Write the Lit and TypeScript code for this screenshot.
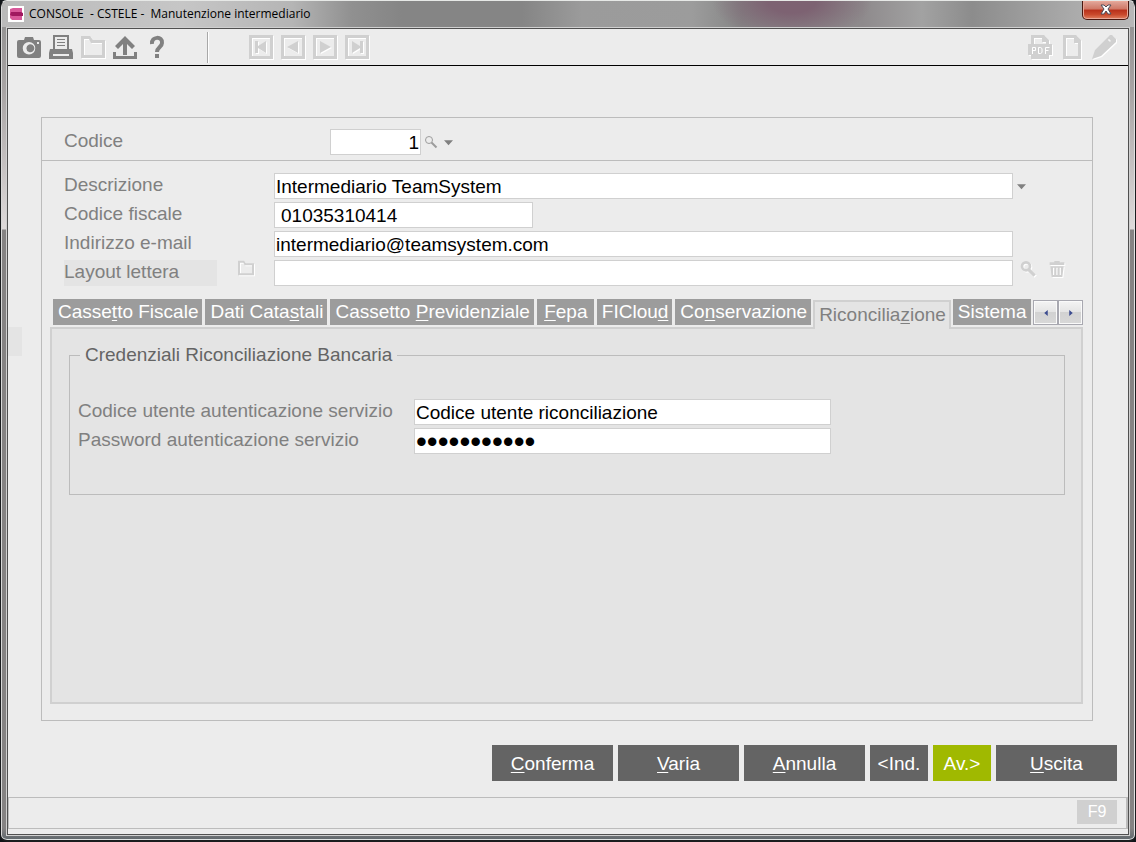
import { LitElement, html, css, svg, nothing } from "lit";
import { customElement, property, state } from "lit/decorators.js";

const ICONS: Record<string, unknown> = {
  camera: svg`<path fill-rule="evenodd" d="M7 5 8 2h8l1 3h5a2 2 0 0 1 2 2v14a2 2 0 0 1-2 2H2a2 2 0 0 1-2-2V7a2 2 0 0 1 2-2zM12 7a6 6 0 1 0 0 12.500A6 6 0 0 0 12 7zM12 9.500a4 4 0 1 1 0 7.500a4 4 0 0 1 0-7.500zM20 7v2h2V7z"/>`,
  printer: svg`<path fill-rule="evenodd" d="M4 0h16v14h-2V2H6v12H4zM8 4h8v1H8zM8 7h8v1H8zM8 10h8v1H8zM1 14h22l1 4v6H0v-6zM4 19v2h16v-2z"/>`,
  folder: svg`<path fill-rule="evenodd" d="M0 1h9l3 4h12v18H0zM3 4v16h18V8H10L8 4z"/>`,
  upload: svg`<path d="M12 1 22 11l-3 3-5-5v11h-4V9l-5 5-3-3zM0 17h3v4h18v-4h3v7H0z"/>`,
  help: svg`<path d="M7 9c-1-8 11-8 10-1 0 4-5 4-5 9" fill="none" stroke="currentColor" stroke-width="4"/><path d="M10 19h4v4h-4z"/>`,
  first: svg`<path fill-rule="evenodd" d="M0 0h24v24H0zM3 3v18h18V3z"/><path d="M6 6h3v5l8-5v12l-8-5v5H6z"/>`,
  prev: svg`<path fill-rule="evenodd" d="M0 0h24v24H0zM3 3v18h18V3z"/><path d="M17 6v12L6 12z"/>`,
  next: svg`<path fill-rule="evenodd" d="M0 0h24v24H0zM3 3v18h18V3z"/><path d="M7 6v12l11-6z"/>`,
  last: svg`<path fill-rule="evenodd" d="M0 0h24v24H0zM3 3v18h18V3z"/><path d="M18 6h-3v5L7 6v12l8-5v5h3z"/>`,
  pdf: svg`<path fill-rule="evenodd" d="M3 0h13l5 5v4h3v11h-3v4H3v-4H0V9h3zM6 3v6h12V7h-4V3z"/><path d="M4.500 19v-6.500h3v3h-3M10.500 12.500v6h2l1.500-1v-4l-1.500-1zM17.500 19v-6.500h4M17.500 15.500h3" fill="none" stroke="#fff"/>`,
  page: svg`<path fill-rule="evenodd" d="M3 0h13l5 5v19H3zM6 3v18h12V8h-4V3z"/>`,
  pencil: svg`<path fill-rule="evenodd" d="M18 0h2l4 4v3L9 21l-9 3 3-9zM17 4l-1 1 2 2 1-1z"/>`,
  search: svg`<circle cx="9" cy="8" r="6" fill="none" stroke="currentColor" stroke-width="4"/><path d="m13 13 9 9" stroke="currentColor" stroke-width="5"/>`,
  lens: svg`<circle cx="8" cy="8" r="7" fill="none" stroke="currentColor" stroke-width="2"/><path d="m13 13 10 10" stroke="currentColor" stroke-width="4"/>`,
  trash: svg`<path fill-rule="evenodd" d="M8 0h8v2h7v4H1V2h7zM2 8h20l-2 16H4zM6 10v11h2V10zM11 10v11h2V10zM16 10v11h2V10z"/>`,
  down: svg`<path d="M0 6h24L12 19z"/>`,
  left: svg`<path d="M19 0v24L5 12z"/>`,
  right: svg`<path d="M5 0v24l14-12z"/>`,
};

@customElement("ts-icon")
class TsIcon extends LitElement {
  @property() name = "";

  static styles = css`
    :host {
      display: block;
    }
    .glyph {
      display: block;
      width: 100%;
      height: 100%;
      fill: currentColor;
      overflow: visible;
    }
  `;

  render() {
    return html`<svg class="glyph" viewBox="0 0 24 24" aria-hidden="true">${ICONS[this.name] ?? nothing}</svg>`;
  }
}

interface Item {
  id: string;
  pre: string;
  key: string;
  post: string;
  kind?: string;
}

const TABS: Item[] = [
  { id: "cf", pre: "Casse", key: "t", post: "to Fiscale" },
  { id: "dc", pre: "Dati Cata", key: "s", post: "tali" },
  { id: "cp", pre: "Cassetto ", key: "P", post: "revidenziale" },
  { id: "fe", pre: "", key: "F", post: "epa" },
  { id: "fi", pre: "FIClou", key: "d", post: "" },
  { id: "co", pre: "Co", key: "n", post: "servazione" },
  { id: "ri", pre: "Riconcilia", key: "z", post: "ione" },
  { id: "si", pre: "Sistema", key: "", post: "" },
];

const ACTIONS: Item[] = [
  { id: "conferma", pre: "", key: "C", post: "onferma" },
  { id: "varia", pre: "", key: "V", post: "aria" },
  { id: "annulla", pre: "", key: "A", post: "nnulla" },
  { id: "ind", pre: "<Ind.", key: "", post: "", kind: "short" },
  { id: "av", pre: "Av.>", key: "", post: "", kind: "short accent" },
  { id: "uscita", pre: "", key: "U", post: "scita" },
];

const caption = (i: Item) => html`${i.pre}${i.key ? html`<u>${i.key}</u>` : nothing}${i.post}`;

@customElement("app-root")
class AppRoot extends LitElement {
  @state() private active = "ri";

  static styles = css`
    :host {
      display: block;
      font-family: "Liberation Sans", Arial, sans-serif;
      font-size: 19px;
      line-height: 22px;
      color: #808080;
    }
    * {
      box-sizing: border-box;
    }
    button,
    input {
      font: inherit;
      margin: 0;
      padding: 0;
      border: 0;
      border-radius: 0;
    }
    button {
      background: none;
      color: inherit;
    }
    u {
      text-decoration-thickness: 1px;
      text-underline-offset: 2px;
    }
    .desktop {
      background: #101418;
    }
    .window {
      min-height: 100vh;
      display: flex;
      flex-direction: column;
      border: 1px solid;
      border-width: 1px 1px 2px;
      border-color: #e6e8e6 #1a1c1e #1a1c1e #1a1c1e;
      border-radius: 7px;
      padding: 0 5px 4px;
      background: linear-gradient(#8e8e8e 0, #a8a4a4 90px, #dedada 228px, #858383 229px, #858383 calc(100% - 12px), #5f676c 100%);
      box-shadow: inset 1px 0 #d8d8d8, inset -1px 0 #e0e0e0, inset 0 -1px #e0e4e4;
    }
    .titlebar {
      height: 26px;
      margin: 0 -4px;
      padding-left: 6px;
      display: flex;
      align-items: center;
      gap: 5px;
      border-radius: 6px 6px 0 0;
      color: #000;
      font-family: "Open Sans", "Noto Sans", sans-serif;
      font-size: 12px;
      line-height: 16px;
      background: radial-gradient(ellipse 80px 40px at 790px 0, #7d6272 30%, transparent 100%),
        linear-gradient(90deg, #bababa 0, #c6c6c6 180px, #b5b5b5 290px, #909090 350px, #858585 400px, #858585 520px, #9b9b9b 580px, #9c9c9c 690px, #858585 740px, #8e8a8c 860px, #a2a2a2 920px, #8c8c8c 970px, #aaaaaa 1070px, #b8b8b8 100%);
    }
    .logo {
      width: 16px;
      height: 16px;
    }
    .title {
      flex: 1;
      margin: 0;
      font: inherit;
      white-space: pre;
    }
    .close {
      align-self: flex-start;
      width: 47px;
      height: 19px;
      margin-right: 5px;
      border: 1px solid #4a1810;
      border-top: 0;
      border-radius: 0 0 5px 5px;
      box-shadow: inset 0 0 0 1px #e9a898;
      background: linear-gradient(#e2a89c 0, #cf7765 45%, #b8301a 50%, #c9492c 75%, #e08060 100%);
    }
    .cross {
      display: block;
      margin: 0 auto 2px;
      width: 12px;
      height: 11px;
    }
    .client {
      flex: 1;
      display: flex;
      flex-direction: column;
      border: 1px solid #d0d0d0;
      outline: 1px solid #505050;
      outline-offset: -2px;
      padding: 1px;
      background: #ececec;
    }
    .toolbar {
      height: 37px;
      padding: 0 12px 0 9px;
      display: flex;
      align-items: center;
      gap: 8px;
      border-bottom: 1px solid #000;
      color: #808080;
    }
    .tool {
      width: 24px;
      height: 24px;
    }
    .tool:disabled,
    .mini:disabled {
      color: #d0d0d0;
      filter: drop-shadow(1px 1px 0 #fff);
    }
    .separator {
      width: 2px;
      height: 31px;
      margin: 0 32px 0 30px;
      background: linear-gradient(90deg, #a8a8a8 50%, #fff 50%);
    }
    .grow {
      flex: 1;
    }
    .main {
      flex: 1;
      display: flex;
      flex-direction: column;
      padding: 51px 35px 16px 0;
    }
    .workspace {
      flex: 1;
      display: flex;
    }
    .handle {
      width: 14px;
      height: 29px;
      margin: 210px 19px 0 0;
      background: #e4e4e4;
    }
    .card {
      flex: 1;
      min-width: 0;
      display: flex;
      flex-direction: column;
      border: 1px solid #bcbcbc;
    }
    .keyrow {
      height: 43px;
      padding: 6px 22px 0;
      display: grid;
      grid-template-columns: 266px 91px auto auto;
      justify-content: start;
      align-items: center;
      border-bottom: 1px solid #bcbcbc;
    }
    .fields {
      display: grid;
      grid-template-columns: 153px 57px minmax(0, 1fr) 57px;
      gap: 3px 0;
      padding: 12px 22px 13px;
    }
    .label {
      height: 26px;
      padding: 1px 0 3px;
    }
    .shaded {
      background: #e4e4e4;
    }
    .field {
      width: 100%;
      height: 26px;
      padding: 1px 1px 0;
      border: 1px solid #d0d0d0;
      background: #fff;
      color: #000;
    }
    .field:focus {
      outline: none;
    }
    .code {
      text-align: right;
    }
    .fiscal {
      width: 259px;
      padding-left: 6px;
    }
    .secret {
      font-size: 31px;
    }
    .mini {
      width: 16px;
      height: 16px;
    }
    .browse {
      justify-self: center;
    }
    .small {
      width: 12px;
      height: 12px;
      margin-left: 4px;
      color: #9c9c9c;
    }
    .arrow {
      width: 9px;
      height: 9px;
      margin-left: 4px;
    }
    .keyrow .arrow {
      margin-left: 7px;
    }
    .side {
      display: flex;
      align-items: center;
    }
    .pair {
      padding: 0 0 8px 7px;
      gap: 13px;
    }
    .tabs {
      display: flex;
      align-items: flex-start;
      height: 30px;
      margin: 0 9px -2px 11px;
      z-index: 1;
    }
    .strip {
      flex: 1;
      min-width: 0;
      display: flex;
      gap: 3px;
      overflow: hidden;
    }
    .tab {
      flex: none;
      min-width: 57px;
      height: 26px;
      padding: 0 4px 0 5px;
      background: #9c9c9c;
      color: #fff;
      white-space: nowrap;
    }
    .tab.current {
      height: 29px;
      margin: 1px -1px 0;
      border: 2px solid #d0d0d0;
      border-bottom: 0;
      padding: 0 3px 2px 4px;
      background: #e4e4e4;
      color: #808080;
    }
    .scroll {
      width: 25px;
      height: 25px;
      margin-top: 1px;
      display: grid;
      place-items: center;
      border: 1px solid #a8a8b0;
      box-shadow: inset 0 0 0 1px #fafafa;
      background: linear-gradient(#f4f4f4 0, #e4e4e4 48%, #d2d2d2 50%, #d8d8d8 100%);
      color: #3c4c90;
    }
    .scroll ts-icon {
      width: 6px;
      height: 6px;
    }
    .panel {
      flex: 1;
      margin: 0 9px 16px 8px;
      padding: 15px 16px 24px 17px;
      border: 2px solid #d0d0d0;
      background: #e4e4e4;
    }
    .group {
      margin: 0;
      min-width: 0;
      padding: 33px 8px 40px;
      border: 1px solid #bcbcbc;
      display: grid;
      grid-template-columns: 336px minmax(0, 417px);
      gap: 3px 0;
    }
    .legend {
      margin-left: 2px;
      padding: 0 5px;
      color: #646464;
    }
    .actions {
      display: flex;
      justify-content: flex-end;
      gap: 5px;
      margin: 24px -24px 0 0;
    }
    .action {
      width: 121px;
      height: 36px;
      padding-top: 2px;
      background: #646464;
      color: #fff;
    }
    .short {
      width: 58px;
    }
    .accent {
      background: #a0b900;
    }
    .status {
      height: 32px;
      margin-bottom: 5px;
      padding: 0 9px 2px;
      display: flex;
      justify-content: flex-end;
      align-items: center;
      border: 1px solid #bcbcbc;
      border-right-width: 2px;
    }
    .fkey {
      width: 40px;
      height: 24px;
      background: #d0d0d0;
      color: #fff;
      font-size: 16px;
    }
  `;

  private tool(name: string, label: string, disabled = false) {
    return html`<button class="tool" aria-label=${label} ?disabled=${disabled}><ts-icon name=${name}></ts-icon></button>`;
  }

  render() {
    return html`<div class="desktop"><div class="window">
      <header class="titlebar">
        <svg class="logo" viewBox="0 0 16 16" aria-hidden="true">
          <path d="M0 0h16v16H0z" fill="#fff" />
          <path d="M2 3 5 2h9v12H4l-2-2z" fill="#d8589a" />
          <path d="M3 6h10l2 1v3H4L2 9z" fill="#a01860" />
        </svg>
        <h1 class="title">CONSOLE  - CSTELE -  Manutenzione intermediario</h1>
        <button class="close" aria-label="Chiudi">
          <svg class="cross" viewBox="0 0 12 11" aria-hidden="true">
            <path d="M1 1h3l2 2 2-2h3L8 5l3 5H8L6 7l-2 3H1l3-5z" fill="#fff" stroke="#4c4c58" />
          </svg>
        </button>
      </header>
      <div class="client">
        <nav class="toolbar" aria-label="Strumenti">
          ${this.tool("camera", "Cattura")} ${this.tool("printer", "Stampa")}
          ${this.tool("folder", "Apri", true)} ${this.tool("upload", "Esporta")}
          ${this.tool("help", "Aiuto")}
          <span class="separator"></span>
          ${this.tool("first", "Primo", true)} ${this.tool("prev", "Precedente", true)}
          ${this.tool("next", "Successivo", true)} ${this.tool("last", "Ultimo", true)}
          <span class="grow"></span>
          ${this.tool("pdf", "PDF", true)} ${this.tool("page", "Nuovo", true)}
          ${this.tool("pencil", "Modifica", true)}
        </nav>
        <main class="main">
          <div class="workspace">
            <div class="handle"></div>
            <section class="card">
              <div class="keyrow">
                <label class="label" for="codice">Codice</label>
                <input class="field code" id="codice" .value=${"1"} />
                <button class="small" aria-label="Cerca codice"><ts-icon name="lens"></ts-icon></button>
                <button class="arrow" aria-label="Elenco codici"><ts-icon name="down"></ts-icon></button>
              </div>
              <div class="fields">
                <label class="label" for="descrizione">Descrizione</label>
                <span></span>
                <input class="field" id="descrizione" .value=${"Intermediario TeamSystem"} />
                <div class="side"><button class="arrow" aria-label="Elenco"><ts-icon name="down"></ts-icon></button></div>
                <label class="label" for="fiscale">Codice fiscale</label>
                <span></span>
                <input class="field fiscal" id="fiscale" .value=${"01035310414"} />
                <span></span>
                <label class="label" for="email">Indirizzo e-mail</label>
                <span></span>
                <input class="field" id="email" .value=${"intermediario@teamsystem.com"} />
                <span></span>
                <label class="label shaded" for="layout">Layout lettera</label>
                <button class="mini browse" aria-label="Sfoglia" disabled><ts-icon name="folder"></ts-icon></button>
                <input class="field" id="layout" />
                <div class="side pair">
                  <button class="mini" aria-label="Visualizza" disabled><ts-icon name="search"></ts-icon></button>
                  <button class="mini" aria-label="Elimina" disabled><ts-icon name="trash"></ts-icon></button>
                </div>
              </div>
              <div class="tabs">
                <div class="strip" role="tablist">
                  ${TABS.map(
                    (t) => html`<button
                      class="tab ${t.id === this.active ? "current" : ""}"
                      role="tab"
                      aria-selected=${t.id === this.active ? "true" : "false"}
                      @click=${() => (this.active = t.id)}
                    >${caption(t)}</button>`
                  )}
                </div>
                <button class="scroll" aria-label="Schede precedenti"><ts-icon name="left"></ts-icon></button>
                <button class="scroll" aria-label="Schede successive"><ts-icon name="right"></ts-icon></button>
              </div>
              <div class="panel" role="tabpanel">
                <fieldset class="group">
                  <legend class="legend">Credenziali Riconciliazione Bancaria</legend>
                  <label class="label" for="utente">Codice utente autenticazione servizio</label>
                  <input class="field" id="utente" .value=${"Codice utente riconciliazione"} />
                  <label class="label" for="password">Password autenticazione servizio</label>
                  <input class="field secret" id="password" type="password" .value=${"riconcilia1"} />
                </fieldset>
              </div>
            </section>
          </div>
          <div class="actions">
            ${ACTIONS.map((a) => html`<button class="action ${a.kind ?? ""}">${caption(a)}</button>`)}
          </div>
        </main>
        <footer class="status"><button class="fkey">F9</button></footer>
      </div>
    </div></div>`;
  }
}
